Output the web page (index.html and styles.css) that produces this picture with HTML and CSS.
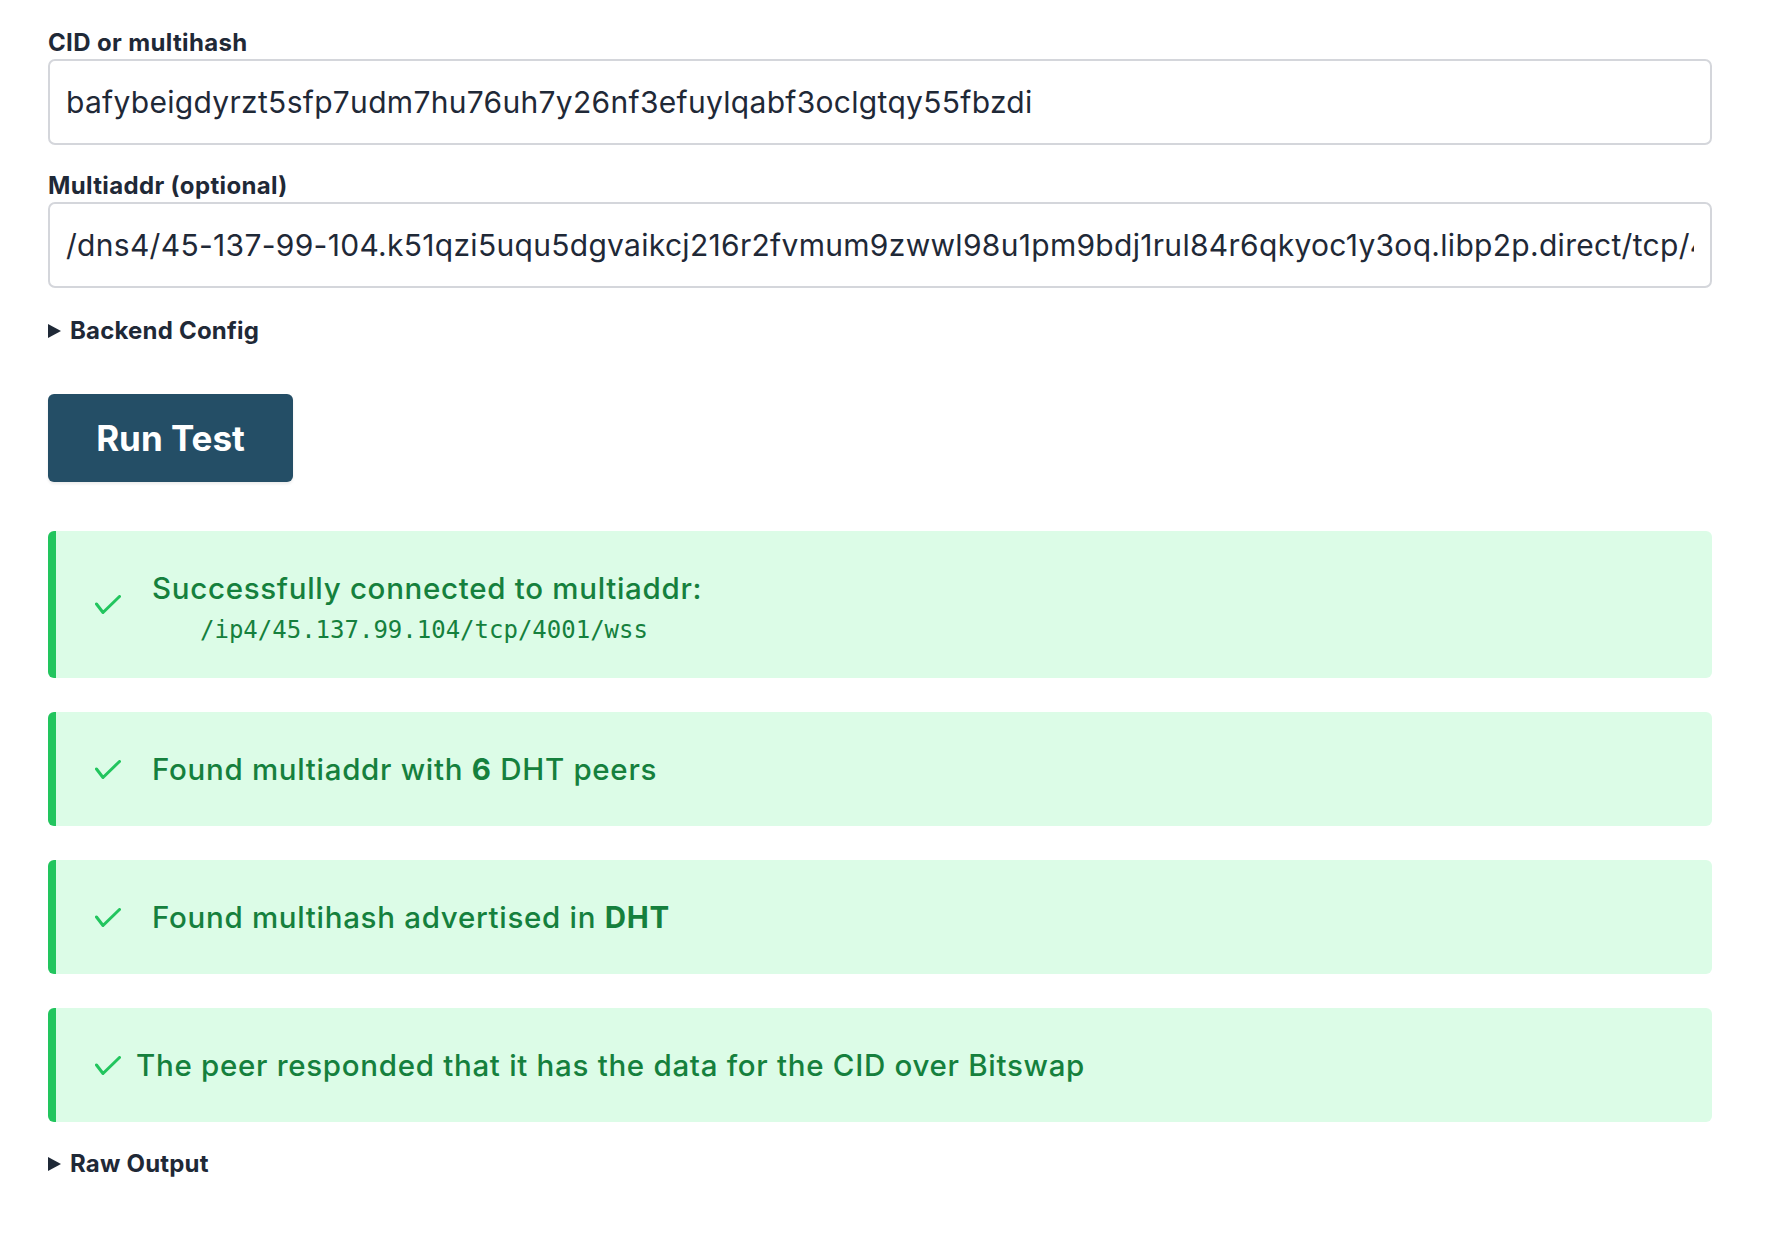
FILE: index.html
```html
<!DOCTYPE html>
<html lang="en">
<head>
<meta charset="utf-8">
<title>Retrieval Check</title>
<link rel="stylesheet" href="styles.css">
</head>
<body>
<main class="page">
  <form class="form">
    <label class="field-label" for="cid">CID or multihash</label>
    <input class="field-input" id="cid" type="text" value="bafybeigdyrzt5sfp7udm7hu76uh7y26nf3efuylqabf3oclgtqy55fbzdi">

    <label class="field-label field-label-2" for="maddr">Multiaddr (optional)</label>
    <input class="field-input" id="maddr" type="text" value="/dns4/45-137-99-104.k51qzi5uqu5dgvaikcj216r2fvmum9zwwl98u1pm9bdj1rul84r6qkyoc1y3oq.libp2p.direct/tcp/4001/tls/ws">

    <div class="disclosure disclosure-backend"><span class="caret"></span><span>Backend Config</span></div>

    <button class="run-btn" type="button">Run Test</button>
  </form>

  <section class="results">
    <div class="alert">
      <svg class="check" width="26" height="19" viewBox="0 0 26 19"><polyline points="1.5,9 8,17.5 24.5,1.5" fill="none" stroke="#22c55e" stroke-width="3" stroke-linecap="round" stroke-linejoin="round"/></svg>
      <div class="alert-body">
        <div class="alert-title">Successfully connected to multiaddr:</div>
        <div class="alert-code">/ip4/45.137.99.104/tcp/4001/wss</div>
      </div>
    </div>
    <div class="alert">
      <svg class="check" width="26" height="19" viewBox="0 0 26 19"><polyline points="1.5,9 8,17.5 24.5,1.5" fill="none" stroke="#22c55e" stroke-width="3" stroke-linecap="round" stroke-linejoin="round"/></svg>
      <div class="alert-body">
        <div class="alert-title">Found multiaddr with <strong>6</strong> DHT peers</div>
      </div>
    </div>
    <div class="alert">
      <svg class="check" width="26" height="19" viewBox="0 0 26 19"><polyline points="1.5,9 8,17.5 24.5,1.5" fill="none" stroke="#22c55e" stroke-width="3" stroke-linecap="round" stroke-linejoin="round"/></svg>
      <div class="alert-body">
        <div class="alert-title">Found multihash advertised in <strong>DHT</strong></div>
      </div>
    </div>
    <div class="alert alert-inline">
      <svg class="check" width="26" height="19" viewBox="0 0 26 19"><polyline points="1.5,9 8,17.5 24.5,1.5" fill="none" stroke="#22c55e" stroke-width="3" stroke-linecap="round" stroke-linejoin="round"/></svg>
      <div class="alert-body">
        <div class="alert-title">The peer responded that it has the data for the CID over Bitswap</div>
      </div>
    </div>
  </section>

  <div class="disclosure disclosure-raw"><span class="caret"></span><span>Raw Output</span></div>
</main>
</body>
</html>
```

FILE: styles.css
```css
html, body {
  margin: 0;
  padding: 0;
  background: #ffffff;
}

body {
  font-family: Inter, "Noto Sans", "Liberation Sans", sans-serif;
  color: #1f2937;
}

.page {
  width: 1664px;
  margin-left: 48px;
  padding-top: 29px;
}

.form {
  display: flex;
  flex-direction: column;
  align-items: flex-start;
}

.field-label {
  display: block;
  font-size: 24px;
  line-height: 28px;
  font-weight: 700;
  letter-spacing: 0.35px;
  color: #1f2937;
  margin-bottom: 2px;
}

.field-label-2 {
  margin-top: 27px;
}

.field-input {
  box-sizing: border-box;
  width: 100%;
  height: 86px;
  border: 2px solid #d4d6db;
  border-radius: 7px;
  padding: 0 16px;
  font-family: Inter, "Noto Sans", "Liberation Sans", sans-serif;
  font-size: 30px;
  letter-spacing: 0.3px;
  color: #1f2937;
  background: #ffffff;
  outline: none;
}

.disclosure {
  display: flex;
  align-items: center;
  gap: 9px;
  font-size: 24px;
  line-height: 28px;
  font-weight: 700;
  letter-spacing: 0.2px;
  color: #1f2937;
}

.disclosure-backend {
  margin-top: 29px;
}

.caret {
  width: 0;
  height: 0;
  border-left: 13px solid #1f2937;
  border-top: 7.5px solid transparent;
  border-bottom: 7.5px solid transparent;
}

.run-btn {
  margin-top: 49px;
  width: 245px;
  height: 88px;
  border: none;
  border-radius: 6px;
  background: #244e66;
  color: #ffffff;
  font-family: Inter, "Noto Sans", "Liberation Sans", sans-serif;
  font-size: 35px;
  font-weight: 700;
  box-shadow: 0 2px 3px rgba(0, 0, 0, 0.08);
  cursor: pointer;
}

.results {
  margin-top: 49px;
  display: flex;
  flex-direction: column;
  gap: 34px;
}

.alert {
  display: flex;
  align-items: center;
  gap: 31px;
  padding: 37px 24px 37px 39px;
  background: #dcfce7;
  border-left: 8px solid #22c55e;
  border-radius: 6px;
  color: #15803d;
}

.alert-inline {
  gap: 15px;
}

.check {
  flex: none;
  display: block;
}

.alert-title {
  font-size: 29.5px;
  line-height: 40px;
  font-weight: 500;
  letter-spacing: 0.7px;
}

.alert-title strong {
  font-weight: 700;
}

.alert-code {
  font-family: "DejaVu Sans Mono", "Liberation Mono", monospace;
  font-size: 24px;
  line-height: 21px;
  letter-spacing: 0;
  margin-top: 12px;
  padding-left: 48px;
}

.disclosure-raw {
  margin-top: 28px;
}
```
